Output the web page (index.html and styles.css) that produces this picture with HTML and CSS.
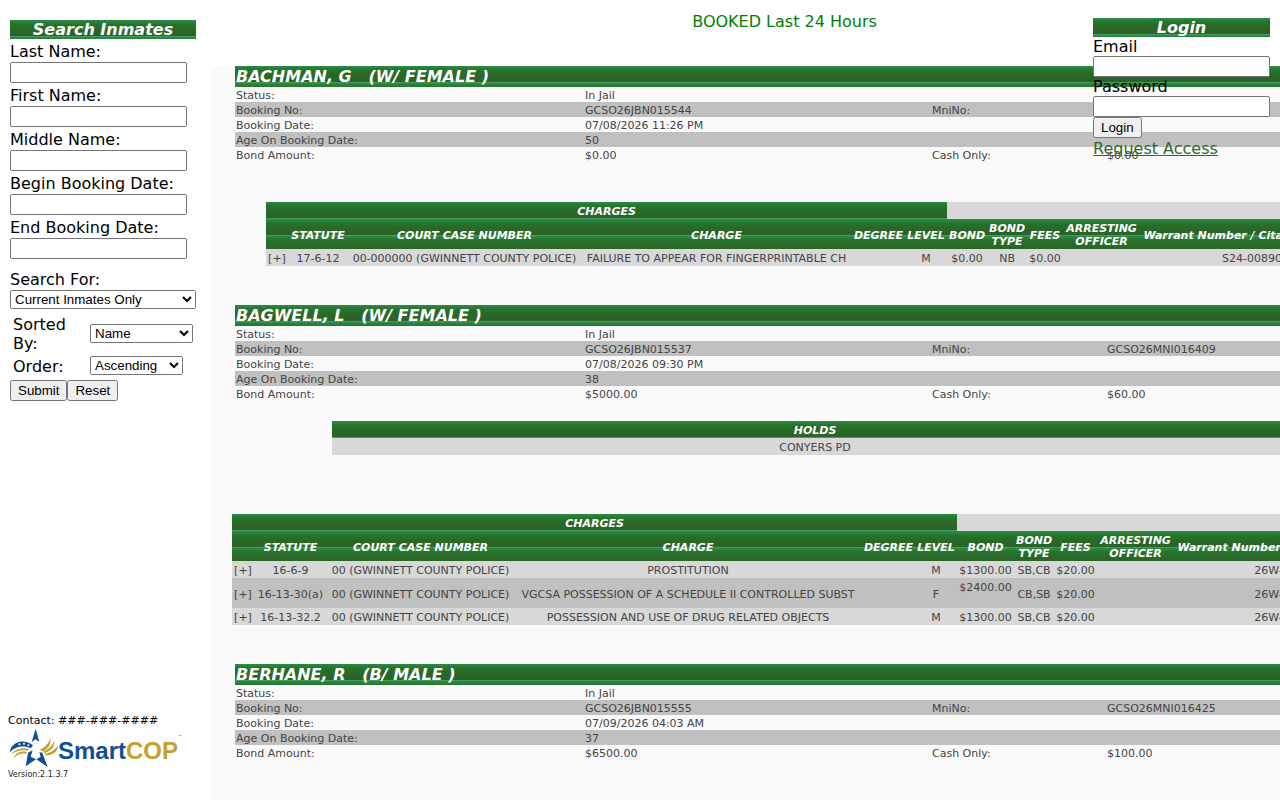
FILE: index.html
```html
<!DOCTYPE html>
<html lang="en">
<head>
  <meta charset="UTF-8">
  <title>Inmate Search</title>
  <link rel="stylesheet" href="styles.css">
</head>
<body>

<div class="page">
  <aside class="sidebar">
    <form class="search">
      <h2 class="bar-title">Search Inmates</h2>
      <label for="last-name">Last Name:</label>
      <input type="text" id="last-name">
      <label for="first-name">First Name:</label>
      <input type="text" id="first-name">
      <label for="middle-name">Middle Name:</label>
      <input type="text" id="middle-name">
      <label for="begin-date">Begin Booking Date:</label>
      <input type="text" id="begin-date">
      <label for="end-date">End Booking Date:</label>
      <input type="text" id="end-date">
      <label for="search-for" class="search-for">Search For:</label>
      <select id="search-for">
        <option>Current Inmates Only</option>
      </select>
      <div class="sorting">
        <label for="sort-by">Sorted By:</label>
        <select id="sort-by" class="sort-by"><option>Name</option></select>
        <label for="sort-order">Order:</label>
        <select id="sort-order" class="sort-order"><option>Ascending</option></select>
      </div>
      <div class="buttons"><button type="submit">Submit</button><button type="reset">Reset</button></div>
    </form>

    <footer class="contact">
      <div>Contact: ###-###-####</div>
      <svg class="logo" width="176" height="40" viewBox="24 12 528 120">
        <!-- star -->
        <g fill="#114f93">
          <path d="M107 14L118 54L107 46L95 54Z"/>
          <path d="M29 86C32 62 52 50 74 53C84 54 92 58 99 64L92 73C78 66 58 66 46 73C38 77 32 81 29 86Z"/>
          <path d="M77 127L84 86L98 79L92 98L108 106Z"/>
          <path d="M143 129L109 106L122 98L118 85L127 86Z"/>
        </g>
        <g fill="#fff">
          <circle cx="58" cy="61" r="3"/>
          <circle cx="72" cy="59" r="3"/>
          <circle cx="85" cy="64" r="3"/>
        </g>
        <!-- wings -->
        <g fill="#c4a02c">
          <path d="M34 91C44 76 64 69 88 75L83 80C66 76 50 80 34 91Z"/>
          <path d="M40 103C45 88 62 80 80 83L79 89C64 86 51 91 40 103Z"/>
          <path d="M120 76C134 72 144 60 151 44C154 62 143 77 126 82Z"/>
          <path d="M130 82C145 77 156 66 163 51C165 68 151 84 131 87Z"/>
          <path d="M134 89C151 87 164 77 174 65C175 82 157 95 136 94Z"/>
        </g>
        <text class="logo-text" x="174" y="104"><tspan fill="#114f93">Smart</tspan><tspan fill="#c4a02c">COP</tspan></text>
        <text class="logo-tm" x="535" y="42">™</text>
      </svg>
      <div class="version">Version:2.1.3.7</div>
    </footer>
  </aside>

  <main class="content">
    <p class="booked">BOOKED Last 24 Hours</p>
    <div class="results">

      <section class="record">
        <table class="inmate">
          <colgroup><col class="name"><col class="value"><col class="name2"><col></colgroup>
          <thead><tr><th colspan="4">BACHMAN, G &nbsp; (W/ FEMALE )</th></tr></thead>
          <tbody>
            <tr><td>Status:</td><td>In Jail</td><td></td><td></td></tr>
            <tr><td>Booking No:</td><td>GCSO26JBN015544</td><td>MniNo:</td><td></td></tr>
            <tr><td>Booking Date:</td><td>07/08/2026 11:26 PM</td><td></td><td></td></tr>
            <tr><td>Age On Booking Date:</td><td>50</td><td></td><td></td></tr>
            <tr><td>Bond Amount:</td><td>$0.00</td><td>Cash Only:</td><td>$0.00</td></tr>
          </tbody>
        </table>
        <table class="charges">
          <colgroup><col class="plus"><col class="statute"><col class="court"><col class="charge"><col class="degree"><col class="level"><col class="bond"><col class="type"><col class="fees"><col class="officer"><col class="warrant"></colgroup>
          <thead>
            <tr><th colspan="6">CHARGES</th><td colspan="5"></td></tr>
            <tr><th></th><th>STATUTE</th><th>COURT CASE NUMBER</th><th>CHARGE</th><th>DEGREE</th><th>LEVEL</th><th>BOND</th><th>BOND<br>TYPE</th><th>FEES</th><th>ARRESTING<br>OFFICER</th><th>Warrant Number / Citation Number</th></tr>
          </thead>
          <tbody>
            <tr><td>[+]</td><td>17-6-12</td><td>00-000000 (GWINNETT COUNTY POLICE)</td><td>FAILURE TO APPEAR FOR FINGERPRINTABLE CH</td><td></td><td>M</td><td>$0.00</td><td>NB</td><td>$0.00</td><td></td><td>S24-00890</td></tr>
          </tbody>
        </table>
      </section>

      <section class="record">
        <table class="inmate">
          <colgroup><col class="name"><col class="value"><col class="name2"><col></colgroup>
          <thead><tr><th colspan="4">BAGWELL, L &nbsp; (W/ FEMALE )</th></tr></thead>
          <tbody>
            <tr><td>Status:</td><td>In Jail</td><td></td><td></td></tr>
            <tr><td>Booking No:</td><td>GCSO26JBN015537</td><td>MniNo:</td><td>GCSO26MNI016409</td></tr>
            <tr><td>Booking Date:</td><td>07/08/2026 09:30 PM</td><td></td><td></td></tr>
            <tr><td>Age On Booking Date:</td><td>38</td><td></td><td></td></tr>
            <tr><td>Bond Amount:</td><td>$5000.00</td><td>Cash Only:</td><td>$60.00</td></tr>
          </tbody>
        </table>
        <table class="holds">
          <thead><tr><th>HOLDS</th></tr></thead>
          <tbody><tr><td>CONYERS PD</td></tr></tbody>
        </table>
        <table class="charges wide">
          <colgroup><col class="plus"><col class="statute"><col class="court"><col class="charge"><col class="degree"><col class="level"><col class="bond"><col class="type"><col class="fees"><col class="officer"><col class="warrant"></colgroup>
          <thead>
            <tr><th colspan="6">CHARGES</th><td colspan="5"></td></tr>
            <tr><th></th><th>STATUTE</th><th>COURT CASE NUMBER</th><th>CHARGE</th><th>DEGREE</th><th>LEVEL</th><th>BOND</th><th>BOND<br>TYPE</th><th>FEES</th><th>ARRESTING<br>OFFICER</th><th>Warrant Number / Citation Number</th></tr>
          </thead>
          <tbody>
            <tr><td>[+]</td><td>16-6-9</td><td>00 (GWINNETT COUNTY POLICE)</td><td>PROSTITUTION</td><td></td><td>M</td><td>$1300.00</td><td>SB,CB</td><td>$20.00</td><td></td><td>26W-00000</td></tr>
            <tr><td>[+]</td><td>16-13-30(a)</td><td>00 (GWINNETT COUNTY POLICE)</td><td>VGCSA POSSESSION OF A SCHEDULE II CONTROLLED SUBST</td><td></td><td>F</td><td>$2400.00<br>&nbsp;</td><td>CB,SB</td><td>$20.00</td><td></td><td>26W-00000</td></tr>
            <tr><td>[+]</td><td>16-13-32.2</td><td>00 (GWINNETT COUNTY POLICE)</td><td>POSSESSION AND USE OF DRUG RELATED OBJECTS</td><td></td><td>M</td><td>$1300.00</td><td>SB,CB</td><td>$20.00</td><td></td><td>26W-00000</td></tr>
          </tbody>
        </table>
      </section>

      <section class="record">
        <table class="inmate">
          <colgroup><col class="name"><col class="value"><col class="name2"><col></colgroup>
          <thead><tr><th colspan="4">BERHANE, R &nbsp; (B/ MALE )</th></tr></thead>
          <tbody>
            <tr><td>Status:</td><td>In Jail</td><td></td><td></td></tr>
            <tr><td>Booking No:</td><td>GCSO26JBN015555</td><td>MniNo:</td><td>GCSO26MNI016425</td></tr>
            <tr><td>Booking Date:</td><td>07/09/2026 04:03 AM</td><td></td><td></td></tr>
            <tr><td>Age On Booking Date:</td><td>37</td><td></td><td></td></tr>
            <tr><td>Bond Amount:</td><td>$6500.00</td><td>Cash Only:</td><td>$100.00</td></tr>
          </tbody>
        </table>
      </section>

    </div>
  </main>
</div>

<form class="login">
  <h2 class="bar-title">Login</h2>
  <label for="email">Email</label>
  <input type="text" id="email">
  <label for="password">Password</label>
  <input type="password" id="password">
  <button type="submit">Login</button>
  <a href="#">Request Access</a>
</form>

</body>
</html>
```
FILE: styles.css
```css
body {
  margin: 0;
  font-family: Verdana, "DejaVu Sans", sans-serif;
  font-size: 16px;
  line-height: 20px;
  color: #000;
  background: #fff;
  overflow-x: hidden;
}

.page {
  display: flex;
  min-height: 100vh;
}

/* green glossy strip, repeats every 17px */
.bar-title,
thead th {
  background: linear-gradient(#2f8a48 0, #25752c 4px, #2a6828 9px, #2b6228 16px, #479a60 16px, #479a60 17px) 0 0 / 100% 17px;
  color: #fff;
  font-style: italic;
  font-weight: bold;
}

.bar-title {
  margin: 0;
  padding-top: 1px;
  font-size: 16px;
  line-height: 18px;
  text-align: center;
}

input {
  box-sizing: border-box;
  width: 177px;
  height: 21px;
  margin: 0;
}

/* Sidebar */
.sidebar {
  display: flex;
  flex-direction: column;
  box-sizing: border-box;
  flex: 0 0 211px;
  height: 100vh;
  padding: 20px 15px 19px 10px;
}

.search {
  display: flex;
  flex-direction: column;
}

.search label {
  line-height: 19px;
  margin: 3px 0 1px;
}

.search .search-for {
  margin-top: 11px;
}

.search select {
  height: 19px;
}

.sorting {
  display: grid;
  grid-template-columns: 74px 1fr;
  column-gap: 3px;
  align-items: center;
  padding: 3px;
}

.sorting .sort-by {
  width: 103px;
}

.sorting .sort-order {
  width: 93px;
}

button {
  height: 21px;
}

.buttons {
  display: flex;
}

.contact {
  margin: auto 0 0 -2px;
  font-size: 11px;
  line-height: 14px;
}

.logo {
  display: block;
}

.logo-text {
  font-family: "Liberation Sans", sans-serif;
  font-size: 72px;
  font-weight: bold;
}

.logo-tm {
  font-size: 12px;
  fill: #114f93;
}

.version {
  font-size: 8px;
  line-height: 13px;
  color: #222;
}

/* Results */
.content {
  flex: 1;
  min-width: 0;
}

.booked {
  margin: 0;
  padding: 12px 0 34px 78px;
  text-align: center;
  color: #008000;
}

.results {
  min-width: 1208px;
  min-height: calc(100vh - 66px);
  background: #fafafa;
  font-size: 11px;
  line-height: 13px;
  color: #444;
}

.record {
  padding-bottom: 39px;
}

table {
  border-collapse: collapse;
  table-layout: fixed;
  margin: 0 auto;
}

.inmate {
  width: 1160px;
}

.inmate .name { width: 349px; }
.inmate .value { width: 347px; }
.inmate .name2 { width: 175px; }

.inmate th {
  padding: 1px 1px 0;
  font-size: 16px;
  line-height: 20px;
  text-align: left;
}

.inmate td {
  padding: 2px 1px 0;
}

.inmate tbody tr:nth-child(even) {
  background: #c0c0c0;
}

.charges,
.holds {
  text-align: center;
  white-space: nowrap;
  background: #d8d8d8;
}

.charges th,
.charges td,
.holds th,
.holds td {
  padding: 3px 0 1px;
}

.charges {
  width: 1098px;
  margin-top: 40px;
}

.charges .plus { width: 22px; }
.charges .statute { width: 60px; }
.charges .court { width: 233px; }
.charges .charge { width: 271px; }
.charges .degree { width: 53px; }
.charges .level { width: 42px; }
.charges .bond { width: 40px; }
.charges .type { width: 40px; }
.charges .fees { width: 36px; }
.charges .officer { width: 77px; }

.charges.wide {
  width: 1166px;
}

.wide .statute { width: 73px; }
.wide .court { width: 187px; }
.wide .charge { width: 348px; }
.wide .bond { width: 57px; }
.wide .fees { width: 43px; }

.charges tbody tr:nth-child(even) {
  background: #c0c0c0;
}

.holds {
  width: 966px;
  margin: 20px auto 59px;
}

/* Login box floats over the results */
.login {
  position: absolute;
  top: 18px;
  right: 10px;
  width: 177px;
  display: flex;
  flex-direction: column;
  align-items: flex-start;
}

.login .bar-title {
  width: 100%;
}

.login label {
  padding-top: 1px;
  line-height: 18px;
}

.login a {
  padding-top: 1px;
  color: #2c6b2c;
}
```
